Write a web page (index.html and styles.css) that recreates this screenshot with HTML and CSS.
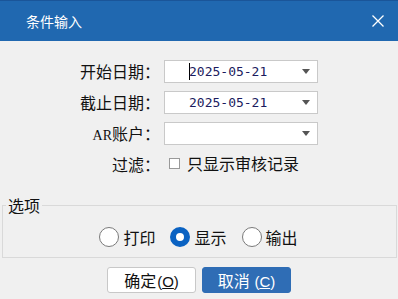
FILE: index.html
```html
<!DOCTYPE html>
<html lang="zh-CN">
<head>
  <meta charset="UTF-8" />
  <title>条件输入</title>
  <link rel="stylesheet" href="styles.css">
</head>
<body>
  <div class="dialog">
    <header class="titlebar">
      <span class="title">条件输入</span>
      <button class="close" aria-label="关闭">
        <svg width="12" height="12" viewBox="0 0 12 12">
          <path d="M0.5 0.5 L11.5 11.5 M11.5 0.5 L0.5 11.5" stroke="#fff" stroke-width="1.3" fill="none"/>
        </svg>
      </button>
    </header>

    <div class="form">
      <label class="label">开始日期：</label>
      <div class="combo">
        <span class="value"><span class="caret"></span>2025-05-21</span>
        <span class="arrow"></span>
      </div>

      <label class="label">截止日期：</label>
      <div class="combo">
        <span class="value">2025-05-21</span>
        <span class="arrow"></span>
      </div>

      <label class="label"><span class="latin">AR</span>账户：</label>
      <div class="combo">
        <span class="value"></span>
        <span class="arrow"></span>
      </div>

      <label class="label">过滤：</label>
      <div class="check">
        <span class="box"></span>
        <span>只显示审核记录</span>
      </div>
    </div>

    <fieldset class="options">
      <legend>选项</legend>
      <div class="radios">
        <span class="radio"><span class="dot"></span>打印</span>
        <span class="radio checked"><span class="dot"></span>显示</span>
        <span class="radio"><span class="dot"></span>输出</span>
      </div>
    </fieldset>

    <div class="actions">
      <button class="btn">确定<span class="key">(<u>O</u>)</span></button>
      <button class="btn primary">取消 <span class="key">(<u>C</u>)</span></button>
    </div>
  </div>
</body>
</html>
```

FILE: styles.css
```css
body {
  margin: 0;
  background: #f0f0f0;
  font-family: "Noto Sans CJK SC", "Noto Sans", sans-serif;
  font-size: 16px;
  color: #111;
}

.dialog {
  width: 398px;
  height: 299px;
  overflow: hidden;
}

.titlebar {
  height: 40px;
  border-top: 1px solid #1a5599;
  background: #2068b0;
  color: #fff;
  display: flex;
  align-items: center;
  justify-content: space-between;
  padding: 0 14px 0 26px;
}

.title {
  font-size: 14px;
}

.close {
  background: none;
  border: none;
  padding: 0;
  display: flex;
}

.form {
  display: grid;
  grid-template-columns: 80px 154px;
  column-gap: 4px;
  row-gap: 8px;
  grid-auto-rows: 23px;
  padding: 19px 0 0 80px;
}

.label {
  text-align: right;
  line-height: 23px;
  white-space: nowrap;
}

.latin {
  font-family: "Liberation Serif", serif;
  font-size: 14px;
}

.combo {
  box-sizing: border-box;
  background: #fff;
  border: 1px solid #c9c9c9;
  display: flex;
  align-items: center;
  justify-content: space-between;
  padding: 0 7px 0 24px;
}

.value {
  font-family: "DejaVu Sans Mono", monospace;
  font-size: 13px;
  color: #1b1b5e;
  display: flex;
  align-items: center;
}

.caret {
  width: 1px;
  height: 17px;
  background: #000;
  margin-right: -1px;
}

.arrow {
  width: 0;
  height: 0;
  border-left: 4px solid transparent;
  border-right: 4px solid transparent;
  border-top: 5px solid #555;
}

.check {
  display: flex;
  align-items: center;
  gap: 7px;
  padding-left: 5px;
  margin-top: -3px;
}

.box {
  width: 9px;
  height: 9px;
  border: 1px solid #999;
  background: #fff;
}

.options {
  margin: 21px 1px 0 2px;
  padding: 14px 0 10px;
  border: 1px solid #d9d9d9;
}

.options legend {
  padding: 0 2px;
  margin-left: 3px;
  line-height: 16px;
}

.radios {
  display: flex;
  justify-content: center;
  gap: 15px;
  margin-left: -2px;
  height: 20px;
}

.radio {
  display: flex;
  align-items: center;
  gap: 4px;
}

.radio .dot {
  box-sizing: border-box;
  width: 20px;
  height: 20px;
  border: 1px solid #7a7a7a;
  border-radius: 50%;
  background: #fff;
}

.radio.checked .dot {
  border: 6px solid #0a62c2;
  background: #fff;
}

.actions {
  display: flex;
  justify-content: center;
  gap: 6px;
  padding: 9px 0 0;
}

.btn {
  width: 89px;
  height: 26px;
  border: 1px solid #c8c8c8;
  border-radius: 3px;
  background: #fff;
  font-family: inherit;
  font-size: 16px;
  color: #111;
  padding: 0;
}

.btn .key {
  font-family: "Liberation Sans", sans-serif;
  font-size: 15px;
  margin-left: 1px;
}

.btn.primary {
  background: #2f6db5;
  border-color: #2f6db5;
  color: #fff;
}
```
